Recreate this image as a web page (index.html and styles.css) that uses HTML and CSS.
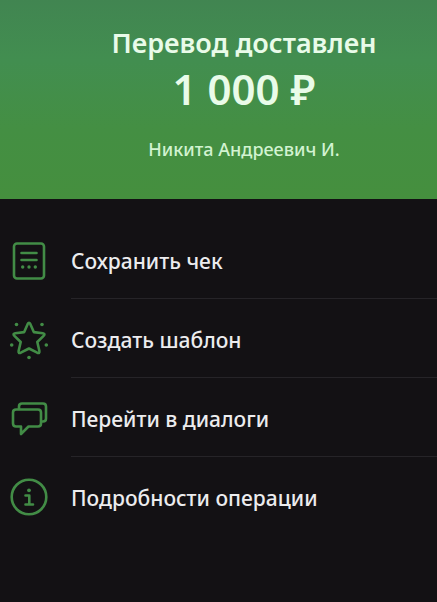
FILE: index.html
```html
<!DOCTYPE html>
<html lang="ru">
<head>
<meta charset="utf-8">
<meta name="viewport" content="width=device-width, initial-scale=1">
<title>Перевод доставлен</title>
<link rel="stylesheet" href="styles.css">
</head>
<body>
<header class="summary">
  <h1 class="title">Перевод доставлен</h1>
  <p class="amount">1 000 ₽</p>
  <p class="recipient">Никита Андреевич И.</p>
</header>
<main class="actions">
  <button class="action" type="button">
    <svg class="icon" viewBox="0 0 40 40" aria-hidden="true">
      <rect x="5" y="2.500" width="30" height="35" rx="3"/>
      <path d="M12.500 12h15M12.500 19h15"/>
      <g class="dots"><circle cx="13.700" cy="26" r="1.700"/><circle cx="20" cy="26" r="1.700"/><circle cx="26.300" cy="26" r="1.700"/></g>
    </svg>
    <span class="label">Сохранить чек</span>
  </button>
  <button class="action" type="button">
    <svg class="icon" viewBox="0 0 40 40" aria-hidden="true">
      <path d="M18.600 4.200Q20 1.500 21.400 4.200L24.800 12.100L33.800 13.200Q36.700 13.800 34.600 15.900L28.300 22L30.400 31Q30.800 33.900 28.200 32.700L20 28.500L11.800 32.700Q9.200 33.900 9.600 31L11.700 22L5.400 15.900Q3.300 13.800 6.200 13.200L15.200 12.100Z"/>
      <g class="dots"><circle cx="7.500" cy="4.500" r="1.800"/><circle cx="33" cy="4.500" r="1.800"/><circle cx="2.700" cy="25" r="1.800"/><circle cx="37.300" cy="25" r="1.800"/><circle cx="20" cy="37.500" r="1.800"/></g>
    </svg>
    <span class="label">Создать шаблон</span>
  </button>
  <button class="action" type="button">
    <svg class="icon" viewBox="0 0 40 40" aria-hidden="true">
      <path d="M7 10.500H29Q32 10.500 32 13.500V24.500Q32 27.500 29 27.500H19.500L12 35V27.500H7Q4 27.500 4 24.500V13.500Q4 10.500 7 10.500Z"/>
      <path d="M10 10V7.500Q10 4.500 13 4.500H34Q37 4.500 37 7.500V19.500Q37 22.500 34 22.500H32.500"/>
    </svg>
    <span class="label">Перейти в диалоги</span>
  </button>
  <button class="action" type="button">
    <svg class="icon" viewBox="0 0 40 40" aria-hidden="true">
      <circle cx="20" cy="19" r="17.300"/>
      <path d="M16.500 17.500H20.300V26M16.500 26.500H24"/>
      <g class="dots"><circle cx="20" cy="12.300" r="1.900"/></g>
    </svg>
    <span class="label">Подробности операции</span>
  </button>
</main>
</body>
</html>
```
FILE: styles.css
```css
* {
  box-sizing: border-box;
}

body {
  margin: 0;
  min-height: 100vh;
  background: #131114;
  color: #ececee;
  font-family: "Noto Sans", "Open Sans", sans-serif;
}

.summary {
  padding: 25px 0 36px 51px;
  background: linear-gradient(#418551 0, #428e50 30%, #448f43 65%, #458f3e 100%);
  color: #e9fbe9;
  text-align: center;
}

.title,
.amount,
.recipient {
  margin: 0;
  font-weight: 500;
}

.title {
  font-size: 27px;
  line-height: 36px;
  font-weight: 600;
}

.amount {
  font-size: 42px;
  line-height: 56px;
  font-weight: 600;
}

.recipient {
  margin-top: 18px;
  color: #d2f3d1;
  font-size: 18px;
  line-height: 28px;
}

.actions {
  padding: 21px 0;
}

.action {
  position: relative;
  display: flex;
  align-items: center;
  gap: 22px;
  width: 100%;
  height: 79px;
  padding: 2px 9px 0;
  border: 0;
  background: none;
  color: inherit;
  font: 500 21px/28px "Noto Sans", "Open Sans", sans-serif;
  text-align: left;
}

.action:not(:last-child)::after {
  content: "";
  position: absolute;
  right: 0;
  bottom: 0;
  left: 71px;
  height: 1px;
  background: #262428;
}

.icon {
  flex: none;
  width: 40px;
  height: 40px;
  fill: none;
  stroke: #428c46;
  stroke-width: 2.6;
  stroke-linecap: round;
  stroke-linejoin: round;
}

.dots {
  fill: #428c46;
  stroke: none;
}
```
